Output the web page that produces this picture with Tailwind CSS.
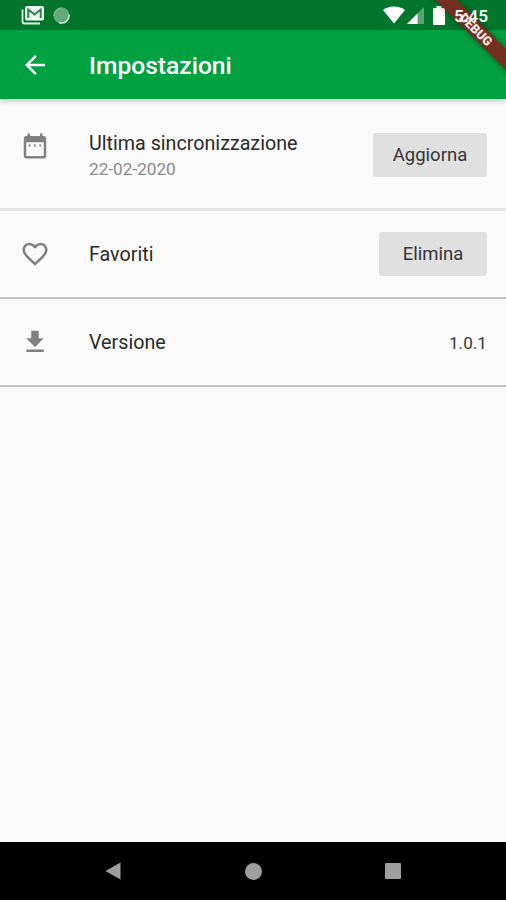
<!DOCTYPE html>
<html lang="it">
<head>
    <meta charset="UTF-8">
    <meta name="viewport" content="width=device-width, initial-scale=1.0">
    <title>Impostazioni</title>
    <script src="https://cdn.jsdelivr.net/npm/@tailwindcss/browser@4"></script>
</head>
<body class="font-['Roboto',sans-serif] bg-[#fafafa]">

    <div class="relative w-[506px] h-[900px] overflow-hidden flex flex-col bg-[#fafafa]">

        <!-- Status bar -->
        <div class="h-[30px] shrink-0 bg-[#00762d] flex items-center justify-between pl-[21px] pr-[18px] text-white">
            <div class="flex items-center gap-[8px]">
                <svg class="w-6 h-5" viewBox="0 0 24 20">
                    <path d="M1.5 4.5v12q0 2 2 2H19" fill="none" stroke="#dcefe2" stroke-width="1.8"/>
                    <rect x="4" y="1" width="19" height="14.5" rx="2" fill="#eef8f0"/>
                    <path d="M7.3 13V4.5l6.2 5 6.2-5V13" fill="none" stroke="#2c7d49" stroke-width="2"/>
                </svg>
                <svg class="w-[17px] h-[17px]" viewBox="0 0 17 17">
                    <circle cx="8.5" cy="8.5" r="8" fill="#64a97c"/>
                    <path d="M16 7.5A7.5 7.5 0 0 1 6 15.6" fill="none" stroke="#d5eadb" stroke-width="1.5"/>
                    <path d="M1 9A7.5 7.5 0 0 1 9 1" fill="none" stroke="#8fc3a0" stroke-width="1"/>
                </svg>
            </div>
            <div class="flex items-center">
                <svg class="w-[22px] h-[18px]" viewBox="0 0 22 18">
                    <path d="M11 17.5L0 4Q4.5 .5 11 .5T22 4z" fill="#fff"/>
                </svg>
                <svg class="w-[17px] h-[17px] ml-[2px]" viewBox="0 0 17 17">
                    <path d="M17 0v17H0z" fill="#fff" fill-opacity=".35"/>
                    <path d="M10.5 6.5V17H0z" fill="#fff"/>
                </svg>
                <svg class="w-[12px] h-[19px] ml-[9px] mr-[9px]" viewBox="0 0 12 19">
                    <path d="M3.5 0h5v2H11q1 0 1 1v15q0 1-1 1H1q-1 0-1-1V3q0-1 1-1h2.5z" fill="#fff"/>
                </svg>
                <!-- the system clock sits over the ribbon -->
                <span class="relative z-10 text-[17.3px] leading-[20px] font-medium mt-[2px]">5:45</span>
            </div>
        </div>

        <!-- App bar -->
        <div class="relative h-[69px] shrink-0 bg-[#00a140] flex items-center pl-5 text-white shadow-[0_2px_5px_rgba(0,0,0,0.22)]">
            <svg class="w-[30px] h-[30px]" viewBox="0 0 24 24" fill="currentColor">
                <path d="M20 11H7.830l5.590-5.590L12 4l-8 8 8 8 1.410-1.410L7.830 13H20v-2z"/>
            </svg>
            <h1 class="ml-[39px] text-[24.6px] leading-[30px] font-medium mt-[2px]">Impostazioni</h1>
        </div>

        <!-- Settings list -->
        <div class="h-[112px] shrink-0 flex items-center pl-5 pr-[19px] border-b-[3px] border-[#e3e3e3]">
            <svg class="w-[30px] h-[30px] -mt-[15px] text-[#808080]" viewBox="0 0 24 24" fill="currentColor">
                <path d="M8.4 10.8H6.9v1.500h1.500zm4.300 0h-1.500v1.500h1.500zm4.300 0h-1.500v1.500H17zM19 4h-1V2h-2v2H8V2H6v2H5c-1.110 0-1.990.9-1.990 2L3 20c0 1.100.89 2 2 2h14c1.100 0 2-.9 2-2V6c0-1.100-.9-2-2-2zm0 16H5V9h14v11z"/>
            </svg>
            <div class="ml-[39px] flex-1 pt-[5px]">
                <div class="text-[19.7px] leading-[26px] text-[#2a2a2a]">Ultima sincronizzazione</div>
                <div class="text-[17.2px] leading-[24px] text-[#8a8a8a]">22-02-2020</div>
            </div>
            <button class="w-[114px] h-[44px] mt-[2px] pt-[3px] rounded-[3px] bg-[#e0e0e0] text-[18.5px] text-[#353535]">Aggiorna</button>
        </div>

        <div class="h-[88px] shrink-0 flex items-center pl-5 pr-[19px] border-b-2 border-[#c4c4c4]">
            <svg class="w-[30px] h-[30px] text-[#808080]" viewBox="0 0 24 24" fill="currentColor">
                <path d="M16.500 3c-1.740 0-3.410.81-4.500 2.090C10.910 3.810 9.240 3 7.500 3 4.420 3 2 5.420 2 8.500c0 3.780 3.400 6.860 8.550 11.540L12 21.350l1.450-1.320C18.600 15.360 22 12.280 22 8.500 22 5.420 19.580 3 16.500 3zm-4.400 15.550l-.1.100-.1-.1C7.140 14.240 4 11.390 4 8.500 4 6.500 5.500 5 7.500 5c1.540 0 3.040.99 3.570 2.360h1.870C13.460 5.990 14.960 5 16.500 5c2 0 3.500 1.500 3.500 3.500 0 2.890-3.140 5.740-7.900 10.050z"/>
            </svg>
            <div class="ml-[39px] flex-1 pt-[2px] text-[19.7px] leading-[26px] text-[#2a2a2a]">Favoriti</div>
            <button class="w-[108px] h-[44px] pt-[2px] rounded-[3px] bg-[#e0e0e0] text-[18.5px] text-[#353535]">Elimina</button>
        </div>

        <div class="h-[88px] shrink-0 flex items-center pl-5 pr-[19px] border-b-2 border-[#c4c4c4]">
            <svg class="w-[30px] h-[30px] text-[#808080]" viewBox="0 0 24 24" fill="currentColor">
                <path d="M19 9h-4V3H9v6H5l7 7 7-7zM5 18v2h14v-2H5z"/>
            </svg>
            <div class="ml-[39px] flex-1 pt-[2px] text-[19.7px] leading-[26px] text-[#2a2a2a]">Versione</div>
            <div class="text-[17.2px] leading-[24px] pt-px text-[#3a3a3a]">1.0.1</div>
        </div>

        <!-- Navigation bar -->
        <div class="mt-auto h-[58px] shrink-0 bg-black grid grid-cols-[140px_140px_140px] justify-center justify-items-center items-center text-[#9e9e9e]">
            <svg class="w-[16px] h-[18px]" viewBox="0 0 16 18" fill="currentColor">
                <path d="M15.5 .5v17L.5 9z"/>
            </svg>
            <div class="w-[17px] h-[17px] rounded-full bg-[#9e9e9e]"></div>
            <div class="w-[16px] h-[16px] rounded-[1px] bg-[#9e9e9e]"></div>
        </div>

        <!-- Debug ribbon -->
        <div class="absolute left-[376px] top-[22px] w-[200px] h-[15px] rotate-45 bg-[#752f20] shadow-[0_0_7px_rgba(0,0,0,0.4)] text-white/90 text-center text-[12.6px] leading-[15px] font-black">DEBUG</div>
    </div>

</body>
</html>
